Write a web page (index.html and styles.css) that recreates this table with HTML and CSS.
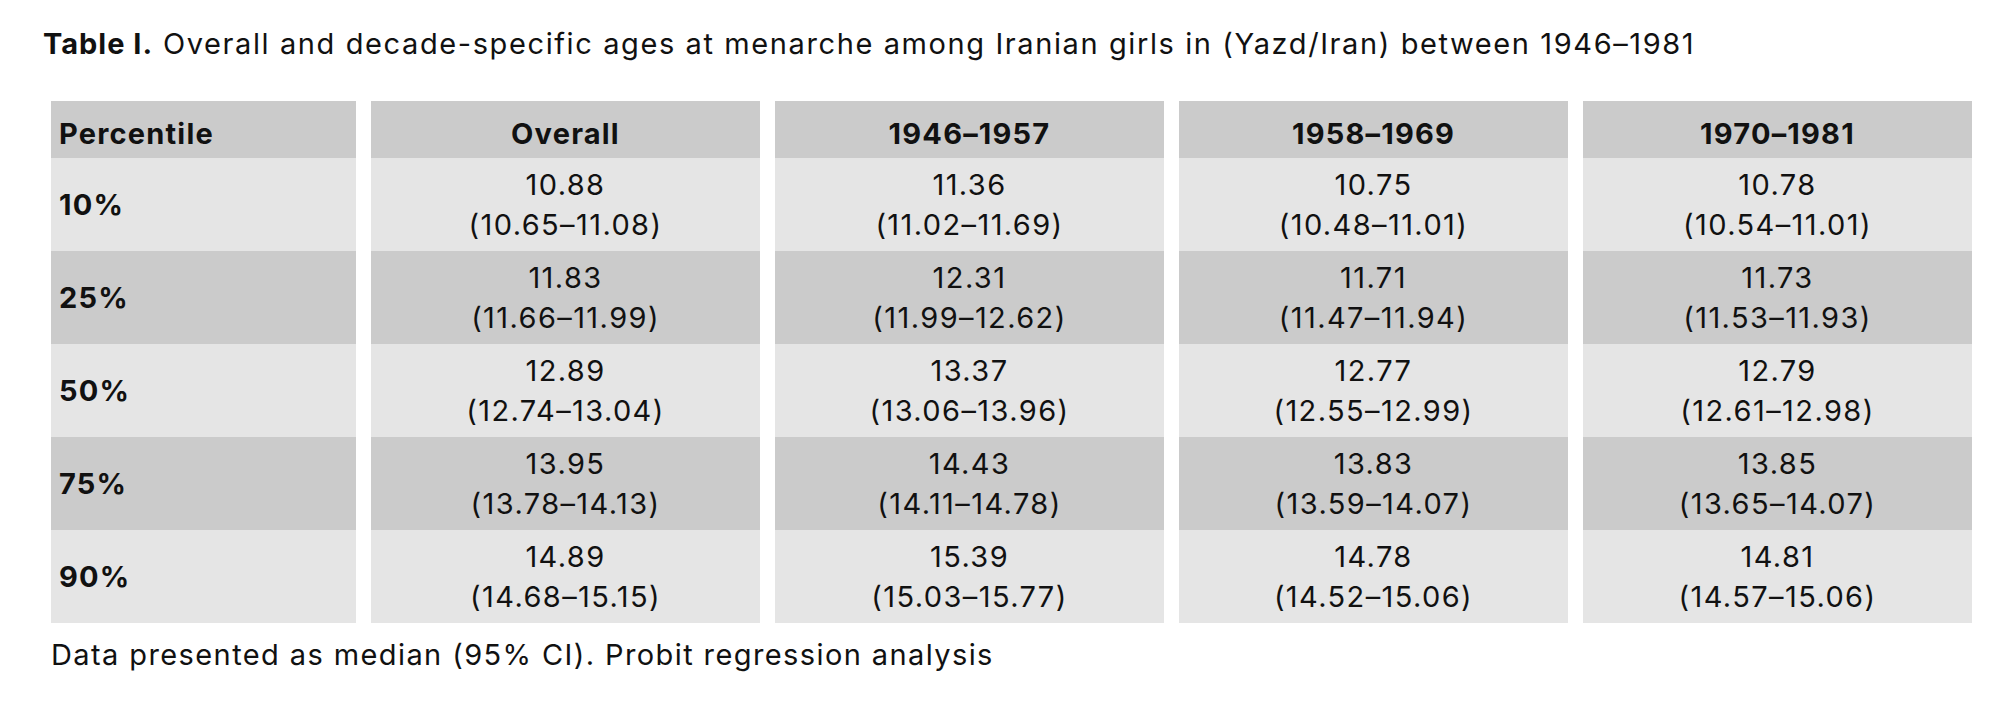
FILE: index.html
```html
<!DOCTYPE html>
<html lang="en">
<head>
<meta charset="utf-8">
<title>Table I</title>
<link rel="stylesheet" href="styles.css">
</head>
<body>
<div class="page">
  <p class="caption"><b>Table I.</b> Overall and decade-specific ages at menarche among Iranian girls in (Yazd/Iran) between 1946–1981</p>
  <div class="grid">
    <div class="cell head first">Percentile</div>
    <div class="cell head">Overall</div>
    <div class="cell head">1946–1957</div>
    <div class="cell head">1958–1969</div>
    <div class="cell head">1970–1981</div>

    <div class="cell light first">10%</div>
    <div class="cell light">10.88<br>(10.65–11.08)</div>
    <div class="cell light">11.36<br>(11.02–11.69)</div>
    <div class="cell light">10.75<br>(10.48–11.01)</div>
    <div class="cell light">10.78<br>(10.54–11.01)</div>

    <div class="cell dark first">25%</div>
    <div class="cell dark">11.83<br>(11.66–11.99)</div>
    <div class="cell dark">12.31<br>(11.99–12.62)</div>
    <div class="cell dark">11.71<br>(11.47–11.94)</div>
    <div class="cell dark">11.73<br>(11.53–11.93)</div>

    <div class="cell light first">50%</div>
    <div class="cell light">12.89<br>(12.74–13.04)</div>
    <div class="cell light">13.37<br>(13.06–13.96)</div>
    <div class="cell light">12.77<br>(12.55–12.99)</div>
    <div class="cell light">12.79<br>(12.61–12.98)</div>

    <div class="cell dark first">75%</div>
    <div class="cell dark">13.95<br>(13.78–14.13)</div>
    <div class="cell dark">14.43<br>(14.11–14.78)</div>
    <div class="cell dark">13.83<br>(13.59–14.07)</div>
    <div class="cell dark">13.85<br>(13.65–14.07)</div>

    <div class="cell light first">90%</div>
    <div class="cell light">14.89<br>(14.68–15.15)</div>
    <div class="cell light">15.39<br>(15.03–15.77)</div>
    <div class="cell light">14.78<br>(14.52–15.06)</div>
    <div class="cell light">14.81<br>(14.57–15.06)</div>
  </div>
  <p class="note">Data presented as median (95% CI). Probit regression analysis</p>
</div>
</body>
</html>
```

FILE: styles.css
```css
html, body {
  margin: 0;
  padding: 0;
  background: #ffffff;
}

.page {
  font-family: "Inter", "Liberation Sans", sans-serif;
  color: #111111;
  padding: 25px 0 0 43px;
}

.caption {
  margin: 0;
  font-size: 29px;
  line-height: 38px;
  letter-spacing: 1.6px;
  white-space: nowrap;
}

.caption b {
  font-weight: 700;
  letter-spacing: 1px;
}

.grid {
  display: grid;
  grid-template-columns: 305px repeat(4, 389px);
  grid-template-rows: 57px repeat(5, 93px);
  column-gap: 15px;
  margin: 38px 0 0 8px;
  width: 1921px;
}

.cell {
  display: flex;
  align-items: center;
  justify-content: center;
  text-align: center;
  font-size: 29px;
  line-height: 40px;
  letter-spacing: 1.4px;
}

.cell.first {
  justify-content: flex-start;
  text-align: left;
  padding-left: 8px;
  font-weight: 700;
  letter-spacing: 1.2px;
}

.head {
  background: #cbcbcb;
  font-weight: 700;
  letter-spacing: 1.2px;
  padding-top: 8px;
}

.light {
  background: #e5e5e5;
}

.dark {
  background: #cbcbcb;
}

.note {
  margin: 13px 0 0 8px;
  font-size: 29px;
  line-height: 38px;
  letter-spacing: 1.4px;
}
```
